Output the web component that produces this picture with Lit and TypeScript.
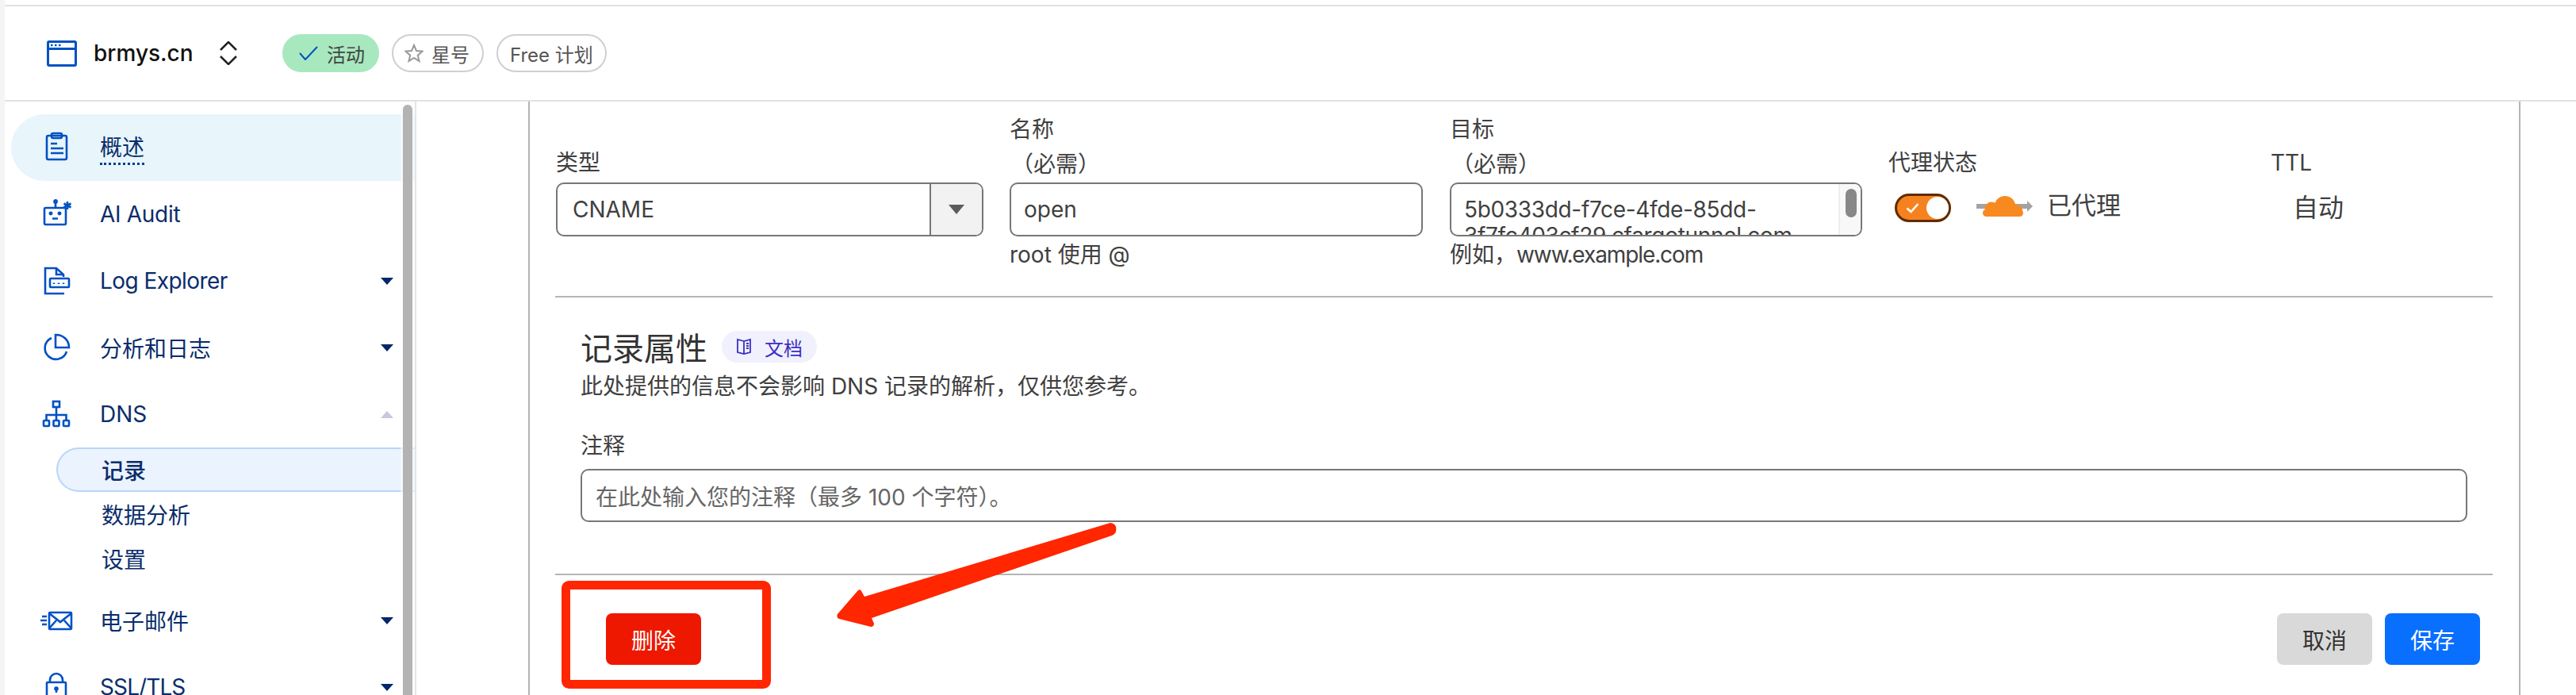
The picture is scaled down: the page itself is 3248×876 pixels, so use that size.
import { LitElement, html, css, svg } from "lit";
import { customElement } from "lit/decorators.js";

const ICONS: Record<string, unknown> = {
  overview: svg`<rect x="9" y="7" width="25" height="30" rx="2"/><rect x="15" y="4" width="13" height="6" rx="2"/><path d="M14 17h8M14 23h16M14 29h16"/>`,
  audit: svg`<rect x="6" y="14" width="27" height="21" rx="1.5"/><path d="M20 7v7M16 27.5h7M35 6v10M30.5 8.5l9 5M39.5 8.5l-9 5"/><circle cx="20" cy="6" r="1.6"/><circle cx="14" cy="21" r="1.2"/><circle cx="25" cy="21" r="1.2"/>`,
  log: svg`<path d="M30 17v-3l-9-8H7v32h24M21 6v8h9"/><rect x="13" y="19" width="24" height="11" rx="1"/><path d="M18 24.5v1.5M24 24.5v1.5M30 24.5v1.5"/>`,
  analytics: svg`<path d="M20 6A16 16 0 0 1 37 22H20Z"/><path d="M15 10A14 14 0 1 0 34 27"/>`,
  dns: svg`<rect x="17" y="6" width="8" height="7"/><path d="M21 13v17M8.5 30v-7h25v7"/><rect x="5" y="30" width="7" height="7" rx="1"/><rect x="17.5" y="30" width="7" height="7" rx="1"/><rect x="30" y="30" width="7" height="7" rx="1"/>`,
  mail: svg`<rect x="12" y="12" width="28" height="21" rx="1"/><path d="M12 13l14 11 14-11M12 32l9-10M40 32l-9-10M3 17h6M1 22h8M3 27h6"/>`,
  lock: svg`<rect x="9" y="16" width="24" height="24" rx="1"/><path d="M13 16v-3a8 8 0 0 1 16 0v3M21 24v5"/><circle cx="21" cy="24" r="1.5"/>`,
};

type NavItem = {
  label: string;
  icon: string;
  caret?: "down" | "up";
  active?: boolean;
  tip?: boolean;
  cls?: string;
};

const NAV_TOP: NavItem[] = [
  { label: "概述", icon: "overview", active: true, tip: true },
  { label: "AI Audit", icon: "audit", cls: "tight-s" },
  { label: "Log Explorer", icon: "log", caret: "down", cls: "tight-m" },
  { label: "分析和日志", icon: "analytics", caret: "down" },
  { label: "DNS", icon: "dns", caret: "up" },
];
const NAV_SUB = [
  { label: "记录", active: true },
  { label: "数据分析", active: false },
  { label: "设置", active: false },
];
const NAV_BOTTOM: NavItem[] = [
  { label: "电子邮件", icon: "mail", caret: "down" },
  { label: "SSL/TLS", icon: "lock", caret: "down", cls: "tight-l" },
];

@customElement("app-root")
export class AppRoot extends LitElement {
  static styles = css`
    :host {
      display: block;
      position: relative;
      width: 3248px;
      height: 876px;
      overflow: hidden;
      background: #fff;
      font-family: Inter, "Noto Sans CJK SC", sans-serif;
      font-size: 28px;
      color: #404040;
    }
    .tight-s {
      letter-spacing: -0.3px;
    }
    .tight-m {
      letter-spacing: -0.55px;
    }
    .tight-l {
      letter-spacing: -0.9px;
    }
    .page {
      height: 876px;
      margin-left: 6px;
      display: flex;
      flex-direction: column;
      box-shadow: -6px 0 0 #f4f4f4;
    }
    .topbar {
      height: 6px;
      flex: none;
      border-bottom: 2px solid #e2e2e2;
    }
    .header {
      height: 118px;
      flex: none;
      display: flex;
      align-items: center;
      padding-left: 53px;
      border-bottom: 2px solid #e2e2e2;
    }
    .domain {
      margin-left: 21px;
      width: 158px;
      font-size: 28px;
      font-weight: 500;
      color: #111;
    }
    .updown {
      fill: none;
      stroke: #222;
      stroke-width: 2.5;
      margin-right: 56px;
    }
    .badge {
      height: 48px;
      box-sizing: border-box;
      display: flex;
      align-items: center;
      border-radius: 24px;
      border: 2px solid #cfcfcf;
      font-size: 24px;
      margin-right: 16px;
      color: #555;
    }
    .badge.active {
      background: #a8e8bf;
      border-color: #a8e8bf;
      padding: 0 16px 0 19px;
      gap: 11px;
      color: #444;
    }
    .badge.star {
      padding: 0 16px 0 14px;
      gap: 10px;
    }
    .badge.plan {
      padding: 0 15px;
    }
    .body {
      flex: 1;
      min-height: 0;
      display: flex;
    }
    .sidebar {
      position: relative;
      width: 517px;
      flex: none;
      padding-top: 16px;
      border-right: 2px solid #e5e5e5;
      color: #0a2d6b;
      overflow: hidden;
    }
    .track {
      position: absolute;
      top: 0;
      bottom: 0;
      right: 0;
      width: 18px;
      background: rgba(250, 250, 250, 0.6);
    }
    .thumb {
      position: absolute;
      top: 4px;
      bottom: -40px;
      left: 3px;
      width: 12px;
      border-radius: 6px;
      background: #b3b3b3;
    }
    .item {
      height: 84px;
      margin-left: 8px;
      padding-left: 36px;
      padding-right: 27px;
      display: flex;
      align-items: center;
    }
    .item.active {
      background: #e8f5fb;
      border-radius: 42px 0 0 42px;
    }
    .nav-icon {
      width: 44px;
      height: 44px;
      flex: none;
      fill: none;
      stroke: #0051c3;
      stroke-width: 2.6;
      margin-right: 32px;
    }
    .tip {
      border-bottom: 3px dotted #0a3d91;
      line-height: 38px;
      margin-top: 3px;
    }
    .caret {
      margin-left: auto;
      width: 0;
      height: 0;
      border-left: 8px solid transparent;
      border-right: 8px solid transparent;
      border-top: 9px solid #00266b;
    }
    .caret.up {
      border-top: 0;
      border-bottom: 9px solid #c5cbdc;
    }
    .sub-item {
      height: 56px;
      margin-left: 65px;
      padding-left: 57px;
      display: flex;
      align-items: center;
    }
    .sub-item.active {
      box-sizing: border-box;
      padding-left: 55px;
      background: #ebf3fe;
      border: 2px solid #b7d6f9;
      border-right: 0;
      border-radius: 28px 0 0 28px;
      font-weight: 500;
    }
    .sub-list {
      margin-bottom: 8px;
    }
    .main {
      flex: 1;
      min-width: 0;
      padding-left: 141px;
    }
    .card {
      width: 2512px;
      height: 100%;
      box-sizing: border-box;
      border-left: 2px solid #b5b5b5;
      border-right: 2px solid #b5b5b5;
      padding: 0 33px;
    }
    .row {
      display: grid;
      grid-template-columns: 572px 555px 553px 482px 1fr;
      height: 245px;
    }
    .label {
      height: 102px;
      display: flex;
      flex-direction: column;
      justify-content: flex-end;
      line-height: 45px;
      padding-bottom: 2px;
      box-sizing: border-box;
    }
    .req {
      padding-left: 2px;
      line-height: 43px;
      margin-bottom: -1px;
    }
    .select,
    .input {
      height: 68px;
      box-sizing: border-box;
      border: 2px solid #777;
      border-radius: 10px;
      background: #fff;
      display: flex;
      align-items: center;
    }
    .select {
      width: 539px;
      overflow: hidden;
    }
    .select .value {
      flex: 1;
      padding-left: 19px;
    }
    .select .arrow {
      width: 64px;
      height: 100%;
      display: flex;
      align-items: center;
      justify-content: center;
      background: #f2f2f2;
      border-left: 2px solid #777;
    }
    .select .arrow i {
      width: 0;
      height: 0;
      border-left: 10px solid transparent;
      border-right: 10px solid transparent;
      border-top: 12px solid #5c5c5c;
    }
    .input {
      width: 521px;
      padding-left: 16px;
    }
    .target {
      position: relative;
      width: 520px;
      display: block;
      overflow: hidden;
      padding: 16px 34px 0 16px;
      line-height: 33px;
      letter-spacing: -0.33px;
    }
    .target .bar {
      position: absolute;
      top: 0;
      bottom: 0;
      right: 0;
      width: 28px;
      box-sizing: border-box;
      background: #f8f8f8;
      border-left: 2px solid #eee;
    }
    .target .bar i {
      position: absolute;
      top: 6px;
      left: 7px;
      width: 14px;
      height: 36px;
      border-radius: 7px;
      background: #888;
    }
    .hint {
      line-height: 46px;
    }
    .hint .url {
      letter-spacing: -1.1px;
    }
    .proxy {
      display: flex;
      align-items: flex-start;
      margin-top: 14px;
      margin-left: 8px;
      font-size: 31px;
      line-height: 30px;
    }
    .toggle {
      width: 71px;
      height: 36px;
      box-sizing: border-box;
      border: 3px solid #5f2c00;
      border-radius: 18px;
      background: #f6821f;
      display: flex;
      align-items: center;
      justify-content: space-between;
      padding: 0 0 0 11px;
      margin-right: 32px;
    }
    .toggle b {
      width: 28px;
      height: 28px;
      border-radius: 50%;
      background: #fff;
    }
    .cloud {
      margin-right: 18px;
      margin-top: 3px;
    }
    .auto {
      font-size: 32px;
      line-height: 64px;
      padding-left: 28px;
    }
    .divider {
      height: 2px;
      margin-left: -1px;
      background: #b5b5b5;
    }
    .props {
      padding: 34px 0 0 31px;
    }
    .props-head {
      display: flex;
      align-items: center;
      height: 56px;
    }
    .props-head h2 {
      margin: 0;
      font-size: 40px;
      font-weight: 400;
      color: #333;
    }
    .doc {
      margin-left: 18px;
      width: 120px;
      height: 40px;
      box-sizing: border-box;
      padding-left: 18px;
      gap: 16px;
      display: flex;
      align-items: center;
      border-radius: 20px;
      background: #f1f0fd;
      color: #3b2fc0;
      font-size: 24px;
    }
    .desc {
      margin-top: 2px;
      line-height: 40px;
    }
    .note-label {
      margin-top: 35px;
      line-height: 40px;
    }
    .note {
      margin-top: 9px;
      width: 2379px;
      height: 67px;
      padding-left: 17px;
      color: #666;
    }
    .props + .divider {
      margin-top: 65px;
    }
    .footer {
      display: flex;
      padding: 48px 16px 0 63px;
    }
    .btn {
      width: 120px;
      height: 65px;
      display: flex;
      align-items: center;
      justify-content: center;
      border-radius: 8px;
      color: #fff;
    }
    .btn.delete {
      background: #ee1800;
      margin-right: auto;
    }
    .btn.cancel {
      background: #d9d9d9;
      color: #333;
      margin-right: 16px;
    }
    .btn.save {
      background: #086fff;
    }
    .marks {
      position: absolute;
      left: 0;
      top: 0;
      pointer-events: none;
    }
  `;

  renderItem(it: NavItem) {
    return html`<div class="item ${it.active ? "active" : ""}">
      <svg class="nav-icon" viewBox="0 0 44 44">${ICONS[it.icon]}</svg>
      <span class="${it.tip ? "tip" : ""} ${it.cls ?? ""}">${it.label}</span>
      ${it.caret ? html`<span class="caret ${it.caret}"></span>` : ""}
    </div>`;
  }

  render() {
    return html`
      <div class="page">
        <div class="topbar"></div>
        <div class="header">
          <svg width="38" height="33" viewBox="0 0 38 33" fill="none" stroke="#0051c3" stroke-width="3">
            <rect x="1.5" y="1.5" width="35" height="30" rx="1.5" />
            <path d="M1.5 10.5h35" />
            <path d="M5 6h2.5M10 6h2.5M15 6h2.5" stroke-width="2.5" />
          </svg>
          <span class="domain">brmys.cn</span>
          <svg class="updown" width="24" height="30" viewBox="0 0 24 30">
            <path d="M2 11L12 1l10 10M2 19l10 10 10-10" />
          </svg>
          <span class="badge active">
            <svg width="24" height="18" viewBox="0 0 24 18" fill="none" stroke="#0051c3" stroke-width="2">
              <path d="M1 9l7 8L23 1" />
            </svg>
            活动
          </span>
          <span class="badge star">
            <svg width="24" height="24" viewBox="0 0 24 24" fill="none" stroke="#999" stroke-width="2">
              <path d="M12 2l3 7 7.500 .7-5.700 5 1.700 7.300L12 18l-6.500 4 1.700-7.300-5.700-5L9 9z" />
            </svg>
            星号
          </span>
          <span class="badge plan">Free 计划</span>
        </div>
        <div class="body">
          <nav class="sidebar">
            ${NAV_TOP.map((it) => this.renderItem(it))}
            <div class="sub-list">
              ${NAV_SUB.map(
                (s) => html`<div class="sub-item ${s.active ? "active" : ""}">${s.label}</div>`
              )}
            </div>
            ${NAV_BOTTOM.map((it) => this.renderItem(it))}
            <div class="track"><div class="thumb"></div></div>
          </nav>
          <main class="main">
            <section class="card">
              <div class="row">
                <div>
                  <div class="label">类型</div>
                  <div class="select">
                    <span class="value">CNAME</span>
                    <span class="arrow"><i></i></span>
                  </div>
                </div>
                <div>
                  <div class="label"><span>名称</span><span class="req">（必需）</span></div>
                  <div class="input">open</div>
                  <div class="hint">root 使用 @</div>
                </div>
                <div>
                  <div class="label"><span>目标</span><span class="req">（必需）</span></div>
                  <div class="input target">
                    5b0333dd-f7ce-4fde-85dd-3f7fc403cf29.cfargotunnel.com
                    <span class="bar"><i></i></span>
                  </div>
                  <div class="hint">例如，<span class="url">www.example.com</span></div>
                </div>
                <div>
                  <div class="label">代理状态</div>
                  <div class="proxy">
                    <span class="toggle">
                      <svg width="17" height="14" viewBox="0 0 17 14" fill="none" stroke="#fff" stroke-width="2.6">
                        <path d="M1.500 7.500l5 4.500 9-10" />
                      </svg>
                      <b></b>
                    </span>
                    <svg class="cloud" width="71" height="26" viewBox="0 0 71 26">
                      <path d="M0 10h66v6H0z" fill="#a3a3a3" />
                      <path d="M64 6l7 7-7 7z" fill="#a3a3a3" />
                      <g fill="#f8891f">
                        <circle cx="36" cy="13.500" r="13.500" />
                        <circle cx="19" cy="16" r="8.500" />
                        <circle cx="51" cy="18.500" r="7" />
                        <rect x="8" y="17" width="51" height="9" rx="4.500" />
                      </g>
                    </svg>
                    <span>已代理</span>
                  </div>
                </div>
                <div>
                  <div class="label">TTL</div>
                  <div class="auto">自动</div>
                </div>
              </div>
              <div class="divider"></div>
              <div class="props">
                <div class="props-head">
                  <h2>记录属性</h2>
                  <span class="doc">
                    <svg width="20" height="22" viewBox="0 0 20 22" fill="none" stroke="#3b2fc0" stroke-width="1.800">
                      <path d="M10 4L2 2v16l8 2 8-2V2zM10 4v16M13 7h3M13 10h3M13 13h3" />
                    </svg>
                    文档
                  </span>
                </div>
                <div class="desc">此处提供的信息不会影响 DNS 记录的解析，仅供您参考。</div>
                <div class="note-label">注释</div>
                <div class="input note">在此处输入您的注释（最多 100 个字符）。</div>
              </div>
              <div class="divider"></div>
              <div class="footer">
                <span class="btn delete">删除</span>
                <span class="btn cancel">取消</span>
                <span class="btn save">保存</span>
              </div>
            </section>
          </main>
        </div>
      </div>
      <svg class="marks" width="3248" height="876" viewBox="0 0 3248 876">
        <rect x="713.500" y="737.500" width="253" height="125" rx="4" fill="none" stroke="#ff2600" stroke-width="11" />
        <path
          d="M1400 659Q1409 660 1407 670Q1406 674 1399 676L1099 779L1102 786Q1102 790 1098 790L1058 780Q1054 778 1056 774L1082 744Q1085 742 1086 745L1090 752Z"
          fill="#ff2600"
        />
      </svg>
    `;
  }
}
